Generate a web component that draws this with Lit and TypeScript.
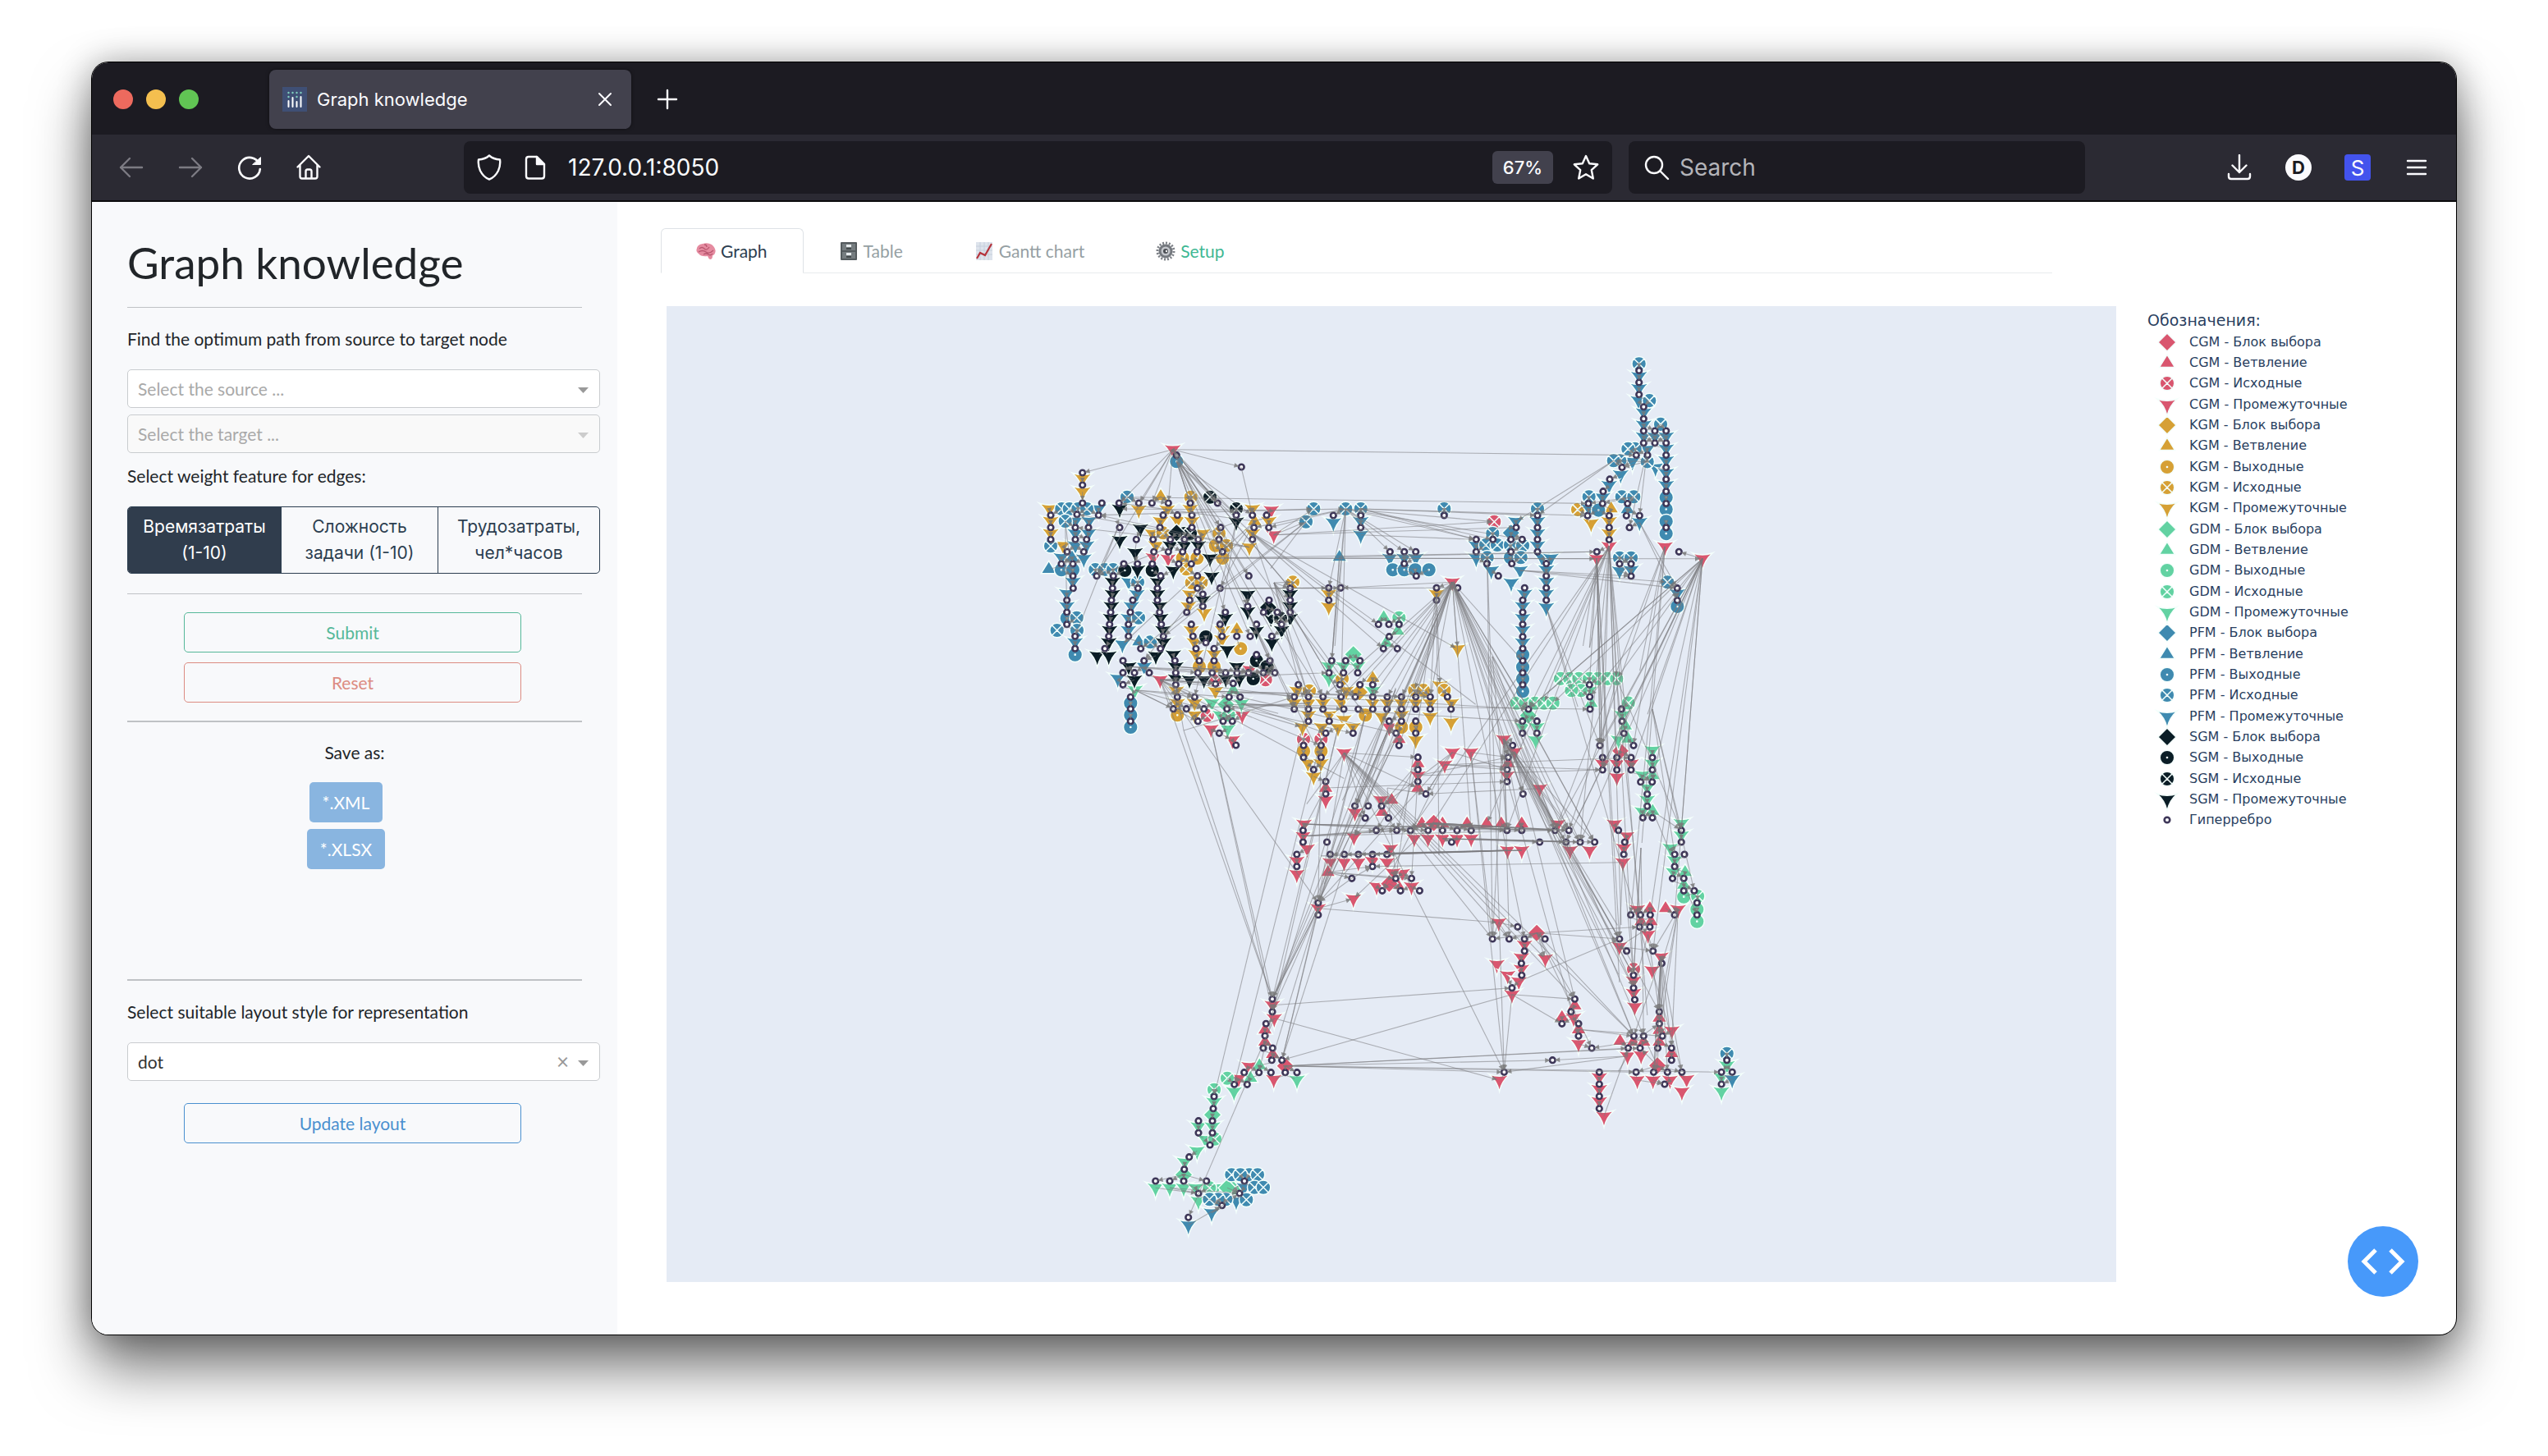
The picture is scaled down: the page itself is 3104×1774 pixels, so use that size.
import { LitElement, html, svg, css } from "lit";
import { customElement, property, state } from "lit/decorators.js";

type Node = { kind: string; x: number; y: number };
type Cluster = { x: number; y: number; sx: number; sy: number; nodes: Record<string, string> };

const PLOT = { x: 812, y: 373, w: 1766, h: 1189 };

const COLORS: Record<string, string> = {
  c: "#d9566f",
  k: "#d6a035",
  g: "#62d2a2",
  p: "#3f8ab0",
  s: "#0b1d26",
};

const SHAPES: Record<string, string> = {
  d: "M-12.4,-7A38,38 0 0 0 12.4,-7A38,38 0 0 0 0,13.6A38,38 0 0 0 -12.4,-7Z",
  u: "M-9.4,5.4L9.4,5.4L0,-10Z",
  b: "M0,-11L11,0L0,11L-11,0Z",
  x: "M8.8,0A8.8,8.8 0 1 1 0,-8.8A8.8,8.8 0 0 1 8.8,0ZM-6,-6L6,6M-6,6L6,-6",
  o: "M8.8,0A8.8,8.8 0 1 1 0,-8.8A8.8,8.8 0 0 1 8.8,0ZM0.6,0A0.6,0.6 0 1 1 0,-0.6A0.6,0.6 0 0 1 0.6,0Z",
};

const CLUSTERS: Cluster[] = [
  {
    x: 1250, y: 520, sx: 3, sy: 3,
    nodes: {
      h: "206 168;206 213;206 279;277 279;340 279;412 279;460 279;520 279;600 279;700 279;787 147;550 104;90 323;90 368;90 412;186 320;265 323;180 368;228 368;342 368;180 412;221 412;403 412;150 457;211 457;129 501;171 501;171 545;172 590;149 634;149 678;149 722;179 766;179 811;258 545;319 545;357 501;407 501;461 501;492 545;316 590;312 634;309 678;305 722;302 766;288 811;409 590;390 634;381 678;374 722;374 766;480 590;480 634;488 678;494 722;502 766;491 811;501 323;553 323;606 323;489 368;606 368;464 412;527 412;579 412;629 412;467 457;520 457;572 457;625 457;558 501;604 501;626 545;626 590;709 590;646 612;598 634;646 656;587 678;604 722;610 766;621 811;657 789;633 855;687 811;687 855;711 368;705 412;718 457;768 323;827 323;879 323;833 368;887 368;827 412;814 545;810 656;728 678;709 722;716 766;770 766;819 766;965 590;965 634;965 678;888 634;868 678;918 678;842 722;934 722;898 766;842 833;891 855;419 811;431 855;354 855;354 899;396 899;450 899;354 943;382 988;382 1031;382 1076;544 855;547 899;547 943;628 899;680 899;729 899;771 899;813 899;867 899;909 899;692 940;757 938;553 988;616 988;742 988;782 988;538 1031;586 1031;650 1031;734 1031;628 1076;720 1076;754 1076;706 1120;767 1164",
      cd: "536 83;896 305;905 395;465 478;519 482;490 925;676 1105;754 1145;790 1055;818 888",
      cx: "692 928;875 925;662 1055",
      kd: "206 190;206 238;85 300;90 345;90 390;135 434;412 303;515 303;600 301;491 345;553 343;606 345;461 390;475 434;645 390;827 300;887 345;827 390;816 440;598 612;593 656;651 680;604 744;615 788;621 832;687 832;549 965;692 967;553 1010;616 1010;616 1054;718 744;716 778",
      ku: "492 254;835 345;770 740",
      ko: "718 480;572 480;625 480;692 434;784 811;633 877;687 877;553 1054",
      kx: "602 257;500 388;705 390;732 434;585 520;605 570;640 570;975 568",
      gd: "398 962;679 1010;787 1012;737 1105;710 1054",
      gu: "757 962",
      gb: "730 1015",
      gx: "740 1054",
      pd: "265 300;180 345;230 345;180 390;228 390;180 434;221 434;129 478;211 482;171 567;149 610;149 656;375 567;405 612;385 656;374 700;374 744;352 795;431 877;335 920;179 788",
      pu: "83 520;168 478;412 785",
      po: "550 127;179 833;129 523;171 523;149 700;382 1010;382 1054;382 1098",
      px: "369 257;130 300;158 300;190 300;222 300;143 345;90 436;253 522;287 522;318 522;185 698;113 744;186 744;408 568;411 698;454 787",
      sd: "342 300;418 372;342 415;398 460;407 523;538 525;316 567;316 612;312 656;309 700;305 744;302 788;260 837;302 837;480 567;480 612;488 656;492 700;500 744;502 788;474 837;375 877;396 925;538 833;547 877;547 921;597 925;650 925;527 434;579 434;629 434;672 480;678 547;646 634;768 347;810 614;810 675;728 700;735 815;770 877;780 921;965 612;965 656;965 700;842 746;895 700;934 744;898 790;730 921",
      so: "361 525;461 525;657 768;842 855;880 877;830 921",
      sx: "672 257;768 300;578 390;600 390;930 700",
      sb: "550 388;885 660",
    },
  },
  {
    x: 1550, y: 580, sx: 3, sy: 3,
    nodes: {
      h: "223 144;323 144;323 188;628 144;206 409;250 409;206 454;600 409;600 454;677 409;430 277;482 277;524 277;482 320;526 365;388 542;426 542;463 542;427 587;406 631;457 631;217 675;268 675;320 675;207 719;260 719;312 719;95 763;247 763;320 763;367 763;80 807;132 807;185 807;251 807;303 807;367 807;420 807;472 807;524 807;577 807;640 807;80 852;132 852;185 852;261 852;314 852;367 852;419 852;472 852;524 852;577 852;653 852;132 896;208 896;427 896;472 896;524 896;195 940;295 940;452 940;524 940;463 985;114 985;178 985;114 1028;178 1028;151 1073;195 1117;195 1162;532 1028;532 1073;532 1117;561 1162;745 232;745 277;806 232;872 232;913 232;891 188;872 277;784 320;875 320;826 365;969 144;969 188;969 232;969 277;1001 320;1001 365;1001 409;1001 454;922 409;915 454;915 498;915 542;915 587;915 631;915 675;915 719;915 763;936 852;914 896;967 896;914 940;967 940;878 985;862 1028;858 1073;858 1117;916 1162;1159 763;1160 807;1161 852",
      cd: "658 388;845 962;885 1008;262 1012;658 1010;725 1010;630 1055;532 1095;858 1095;977 1142;427 918;195 1185",
      cu: "463 962;532 1050;532 1140;862 1050;195 1140",
      cx: "811 167;114 962;178 962",
      kd: "206 431;206 478;600 431;677 632;612 765;90 785;132 830;185 830;80 830;251 830;270 785;367 830;420 830;472 830;524 830;577 830;655 830;132 874;208 874;261 890;400 880;472 874;577 880;653 900;110 918;180 918;240 920;295 918;524 965;130 1050;178 1050;151 1098",
      ku: "367 738",
      kx: "255 741;135 785;520 783;552 783;628 783",
      ko: "340 874;472 918;524 918;114 1006;178 1006",
      kb: "318 790",
      gd: "207 695;260 695;312 695;207 740;367 785;914 918;967 918;962 965",
      gu: "407 516;458 566;416 609;1165 830",
      gx: "463 518;893 830;925 830;960 830;993 830;1025 830",
      gb: "296 652;935 875",
      pd: "223 170;323 166;323 215;430 300;482 300;524 300;745 254;745 300;890 166;800 345;905 345;873 390;969 166;969 210;969 254;985 298;1018 300;1001 343;1001 387;1001 431;1001 480;922 431;915 476;915 520;915 564;915 609",
      pu: "245 296",
      po: "440 343;482 343;522 343;572 343;870 298;915 653;915 698;915 741;915 787",
      px: "151 120;123 167;268 120;323 120;628 120;969 120;805 210;780 252;822 252;870 252;915 254;785 298;908 298",
      pb: "872 208",
    },
  },
  {
    x: 1800, y: 420, sx: 3, sy: 2.7034,
    nodes: {
      h: "590 85;590 124;590 164;607 205;607 244;607 284;648 284;689 284;607 324;648 324;689 324;580 364;621 364;689 364;528 404;689 404;483 443;689 443;459 483;689 483;457 523;548 523;689 523;405 523;402 563;481 563;544 563;592 563;481 602;555 602;689 602;481 642;436 682;736 682;519 722;561 722;561 762;730 802;730 842;526 1200;528 1240;535 1280;570 1320;447 1320;457 1360;509 1360;561 1360;639 1360;457 1400;509 1400;561 1400;639 1400;596 1440;638 1440;620 1480;620 1520;604 1558;639 1558",
      cd: "481 664;436 705;685 665;822 705;457 1380;509 1380;561 1380;509 1425",
      cb: "522 1338",
      kd: "415 588;481 582;481 622",
      ku: "488 540",
      kx: "366 543",
      gd: "408 1140;528 1220;515 1302;639 1336;639 1380;602 1418;620 1460;620 1500;602 1538",
      gu: "540 1255;550 1298;640 1418;640 1536",
      gx: "303 1100;337 1100;370 1100;408 1100;440 1100;475 1100;508 1100;378 1139;343 1139;551 1180",
      pd: "590 104;590 144;588 184;607 224;607 264;607 303;648 303;689 303;689 343;620 345;566 385;523 428;650 405;689 382;689 423;689 463;481 463;457 503;407 540;592 585;519 745;561 742;730 820",
      pu: "548 542",
      po: "442 545;689 503;689 542;689 582;689 622;730 862",
      px: "590 63;628 184;669 262;575 343;550 343;520 382;497 382;620 385;407 501;527 501;571 501;519 702;561 702;694 782",
    },
  },
  {
    x: 1540, y: 880, sx: 2.6133, sy: 3,
    nodes: {
      h: "289 306;331 306;374 306;322 350;396 350;124 395;357 395;422 395;466 395;522 395;568 395;614 395;659 395;773 395;820 395;926 395;970 395;124 438;200 438;597 438;877 438;961 438;1006 438;1052 438;1128 395;1148 438;1145 483;104 483;210 483;255 483;300 483;345 483;391 483;104 527;345 527;279 571;419 571;469 571;376 616;434 616;495 616;172 660;172 704;807 748;727 792;780 792;829 792;894 792;829 836;819 881;1328 395;1328 438;1307 483;1338 483;1307 527;1300 571;1336 571;1336 616;1369 616;1378 660;1378 704;1167 704;1198 704;1229 704;1307 704;1195 748;1228 748;1131 792;1154 836;1238 836;1266 881",
      cd: "372 284;289 330;127 372;286 420;124 416;137 462;104 507;104 555;478 425;522 425;568 425;614 425;659 425;402 462;210 512;255 512;300 512;345 507;391 512;358 600;440 552;410 550;469 600;284 645;172 680;935 372;775 468;820 468;974 468;1036 468;1115 372;1155 416;1145 460;1142 512;747 732;741 885;829 814;819 860;895 864;1188 684;1318 684;1222 776;1131 820;1263 858",
      cu: "406 284;376 328;502 370;568 370;646 370;709 370;755 370;820 370;203 548;425 594;1228 680;1278 680;1200 728;1232 728",
      cb: "540 368;398 590;868 770",
      gd: "1328 370;1328 414;1293 460;1307 505;1303 548",
      gu: "1340 548;1336 594",
      go: "1336 638;1378 684;1378 728",
      gx: "1380 636",
    },
  },
  {
    x: 1540, y: 1100, sx: 2.6133, sy: 3,
    nodes: {
      h: "820 265;789 311;989 352;977 398;948 442;1001 442;1001 487;1043 531;918 575;764 619;1067 619;1067 663;1067 707;1067 752;1176 265;1176 311;1180 354;1258 398;1258 442;1268 487;1177 487;1208 487;1159 531;1197 531;1253 531;1297 531;1297 575;1184 619;1240 619;1284 619;1330 619;1275 663;1473 575;1456 619;1490 619;1456 663",
      cd: "819 242;775 265;811 287;789 335;985 420;1001 515;1067 638;1067 682;1067 726;1082 780;1176 285;1176 330;1180 380;1235 247;1298 467;1157 560;1200 557;1188 648;1238 648;1292 648;1345 645;1330 690;749 648",
      cu: "989 375;948 418;1001 463;1133 505;1175 508;1208 508;1258 420;1258 465;1258 508;1297 550",
      cb: "1252 595",
      cx: "1176 243",
      gd: "1473 595;1456 638;1456 690",
      pd: "1490 645",
      px: "1473 551",
    },
  },
  {
    x: 1380, y: 1200, sx: 3, sy: 3,
    nodes: {
      h: "510 52;510 98;487 142;483 186;477 231;511 231;508 275;545 275;407 320;461 320;505 320;557 320;600 320;371 364;418 364;297 408;294 452;240 497;291 497;240 541;291 541;282 585;206 629;188 674;83 717;135 717;186 717;269 717;408 717;240 762;390 762;326 806;203 850",
      cd: "510 74;517 122;425 298;515 345;387 342",
      cu: "483 164;483 208;511 253",
      cb: "557 296",
      gd: "600 347;370 390;297 428;240 518;291 518;265 565;235 607;190 648;83 742;135 742;186 742;230 742;305 742;240 790",
      gu: "463 294;430 340",
      gx: "345 341;297 383;300 563;280 742;372 742",
      gb: "291 475;186 694;345 742",
      pd: "408 740;378 790;288 833;203 878",
      px: "361 694;425 694;393 694;456 694;445 740;477 740;415 785;340 784;312 784;280 784",
    },
  },
];

// Each entry fans out from its first point to every point after it.
const FANS: string[] = [
  "1429 548;1319 576;1512 569;1363 613;1387 613;1403 613;1424 613;1450 613;1336 700;1483 613;1506 627;1487 643;1521 702;1993 555;1528 735;1568 716;1555 805;1572 717",
  "1436 560;1450 613;1483 613;1512 626;1525 630;1548 672;1493 746;1523 775;1592 850;1612 848;1665 880",
  "1512 569;1525 620",
  "1552 710;1572 700;1571 717;1572 732;1592 849;1610 849;1594 878;1629 849;1637 849;1650 848",
  "1548 625;1372 628;1346 627;1600 620;1640 620",
  "1640 620;1529 644;1548 642;1619 717;1633 850",
  "1548 652;1591 636;1599 620;1820 638;1848 630",
  "1363 608;1420 608;1935 613",
  "1639 620;1693 672;1711 672;1724 672;1798 657;1849 658;1618 795;1626 790;1820 633",
  "1658 650;1800 657",
  "1658 620;1799 657;1811 657;1873 626;1935 628",
  "1632 679;1617 800;1620 805;1640 682;1945 681",
  "1473 685;1935 682;1945 679;2073 681",
  "1486 717;1618 716;1634 716;1769 708",
  "1430 815;1530 820;1541 819;1553 820",
  "1413 828;1434 848;1445 848;1459 863;1477 832;1481 833;1502 832;1552 832;1620 828;1434 862",
  "1380 814;1460 820;1490 820;1535 817",
  "1384 846;1434 862;1447 848;1494 850",
  "1769 708;1634 716;1749 716;1776 716;1776 787;1610 849;1632 849;1655 836;1673 849;1690 849;1707 849;1724 849;1742 849;1672 834;1724 834;1656 980;1640 1025;1651 970;1612 1080;1634 978;1700 878;1704 908",
  "1769 712;1856 806;1862 864;1873 864;1836 908;1838 923;1855 967;1895 1010;1911 1012;1925 1025;1942 1025;1922 1260;1990 1262;2000 1262;1988 1208;1848 1145;1800 1010",
  "1749 732;1755 835;1742 849;1753 1045;1709 1070",
  "1945 681;1950 908;1951 914;1936 792;1952 931;1955 940;1938 830;1928 790;1965 1144;1973 1200",
  "1960 666;1936 792;1951 914;1952 931;1970 931;1987 931;1975 820;1862 864;1880 864;1820 1010;1836 1010;1740 1010;1718 1010;1930 1025;1975 1130;1990 1186;2007 1240",
  "2028 668;1997 820;1990 914;1894 1012;1911 1010;1987 1115;2000 1030",
  "2073 682;2049 680;1862 864;1873 864;1892 850;1937 850;1975 820;1952 931;1987 931;2006 873;2013 950;2012 1115;2023 1160;1949 914;1920 1000;1894 1012;1911 1025;1925 1025;2038 1115;2048 1010",
  "1831 900;1855 967;1838 923;1837 935;1836 952;1836 1010;1854 1010;1894 1012;1911 1012;1908 1025;1925 1025;1942 1025;1970 1145;1973 1190;1990 1188;1991 1203;1830 1143;1972 1130;1858 970;1820 1145",
  "1845 917;1855 967;1970 1145;1988 1188;2018 1233;1993 1262;1918 1217",
  "1637 917;1727 923;1718 970;1700 1010;1660 1010;1740 1010;1818 1142;1838 1144;1913 1217;1832 1306;1880 1175;1990 1262;1608 1100;1577 1011;1590 982",
  "1769 917;1727 971;1837 938;1685 974;1606 1097",
  "1791 917;1838 920;1818 1142;1832 1306",
  "1760 932;1727 971;1837 938;1950 943;1990 930;1686 1080",
  "1727 923;1726 938;1676 1011;1709 1011;1640 1025",
  "1726 938;1950 931;1836 923;1714 1070",
  "1876 961;1727 969;1875 968",
  "1615 960;1836 952",
  "1690 960;1727 967;1700 1072",
  "1588 1011;1700 1006;1740 1004;1836 1008;1894 1008;1911 1010",
  "1588 1013;1677 1008;1702 1009",
  "1588 1016;1718 1005;1895 1007",
  "1746 1003;1677 1011;1701 1011;1719 1011;1757 1011;1775 1011;1792 1011;1836 1011;1854 1011;1894 1011;1911 1010;1650 1096",
  "1746 1006;1894 1014;1911 1014;1836 1014",
  "1732 1006;1836 1004;1854 1006;1911 1009",
  "1758 1020;1876 1026;1908 1026;1925 1026;1942 1026",
  "1792 1022;1908 1027;1925 1028",
  "1836 1034;1621 1041;1638 1041;1655 1041;1672 1041;1690 1041",
  "1854 1034;1638 1041;1672 1041;1690 1040;1606 1043",
  "1977 1048;1672 1054",
  "1618 1063;1647 1070;1700 1070;1672 1056;1719 1072",
  "1647 1070;1606 1099;1672 1055",
  "1606 1099;1650 1095;1553 1215;1555 1230;1550 1290;1550 1217;1562 1290",
  "1606 1116;1826 1122",
  "1826 1122;1849 1129;1818 1143;1838 1143",
  "1872 1137;1997 1129;1973 1143;1818 1144;1838 1144;1857 1144;1882 1144;1990 1262;1918 1215;1939 1277;1870 1166",
  "1973 1153;1982 1158;2014 1158;2007 1128",
  "1842 1195;1973 1152",
  "1551 1218;1840 1210",
  "1842 1210;1562 1291;1918 1217;1833 1306;1902 1246",
  "1560 1236;1815 1310",
  "1566 1299;1984 1277;1996 1277;1892 1292;2002 1305;1830 1304;2098 1299;1580 1307",
  "1984 1284;1892 1292;1832 1306;1970 1308",
  "1947 1357;1980 1278",
  "1918 1255;1990 1262;2014 1262",
  "1991 1262;2021 1255;1939 1277;1984 1277;1997 1277",
  "2025 1173;2021 1233;2021 1248;2019 1277;2036 1277;2049 1307;2012 1306;2015 1306;2031 1306;1990 1262;2025 1262",
  "2040 1115;2021 1233;2014 1158;2025 1173;2036 1277;2012 1306",
  "2013 1140;2014 1158;1991 1203;2021 1233",
  "1999 1033;1978 1190;1990 1188;2003 1262",
  "1977 1052;1973 1143;1988 1190",
  "2011 996;2048 1002;2055 1110",
  "2013 864;2048 1010;2040 1041;2063 1085",
  "1980 820;2048 1008;2003 1115;1952 914",
  "1994 1307;2028 1321",
  "2012 1300;1994 1306;2031 1306;2049 1306;2019 1248;2004 1262;1997 1277",
  "1480 893;1510 893;1553 1216;1551 1230",
  "1442 890;1550 1217;1430 835;1579 850",
  "1413 830;1579 850;1602 908;1550 1218;1640 950;1606 1099",
  "1521 750;1600 924;1554 820;1582 864",
  "1591 850;1480 1336;1430 863;1483 863",
  "1600 900;1504 1321;1606 1098",
  "1550 1240;1448 1484",
  "1635 890;1540 1308;1550 1215",
  "1665 880;1565 1290;1553 1232;1606 1097",
  "1690 880;1570 1290;1552 1215;1606 1097",
  "1710 880;1610 1095;1651 980;1552 1215",
  "1700 840;1700 835;1640 974;1606 1096;1555 1216",
  "1480 840;1700 850;1740 850;1862 864;1700 893",
  "1510 858;1560 870;1630 864;1862 878;1602 893",
  "1500 860;1580 878;1636 893;1938 863",
  "1378 835;1459 863;1450 880",
  "1515 630;1480 800;1450 850;1340 700",
  "1536 635;1363 610;1366 790;1394 803;1485 717",
  "1595 640;1390 790;1410 770;1546 695",
  "1530 660;1300 642;1319 627;1338 628",
  "1298 640;1299 715;1298 740",
  "1363 640;1310 775;1337 700;1364 640",
  "1525 655;1780 790;1800 860;1592 849;1680 760;1692 790",
  "1960 568;1856 628;1884 620",
  "2005 560;1960 568;1977 567;2017 551",
  "2017 555;1998 642;1993 627",
  "1985 595;1935 602;1952 613;1982 627",
  "1860 695;1986 702;2031 707;2043 716",
  "1985 640;2042 715;2045 732",
  "1823 680;1824 1143;1832 1304",
  "1818 800;1838 1000;1895 1012;1942 1026",
  "1880 740;1923 864;1940 900;2049 1306",
  "1442 1431;1408 1439;1425 1439;1442 1439;1470 1439",
  "1408 1447;1460 1454",
  "1425 1447;1460 1454;1510 1454",
  "1447 1484;1489 1469",
  "1476 1478;1489 1469;1510 1454",
];

const ARROW = { standoff: 3, length: 6, half: 3 };
const SNAP = 14;

function buildNodes(): Node[] {
  const out: Node[] = [];
  for (const c of CLUSTERS) {
    for (const [kind, list] of Object.entries(c.nodes)) {
      for (const pair of list.split(";")) {
        const [px, py] = pair.split(" ").map(Number);
        out.push({ kind, x: c.x + px / c.sx - PLOT.x, y: c.y + py / c.sy - PLOT.y });
      }
    }
  }
  const order = "ckgpsh";
  return out.sort((a, b) => order.indexOf(a.kind[0]) - order.indexOf(b.kind[0]));
}

const r1 = (n: number) => Math.round(n * 10) / 10;

function edgePath(x1: number, y1: number, x2: number, y2: number) {
  const len = Math.hypot(x2 - x1, y2 - y1) || 1;
  const ux = (x2 - x1) / len;
  const uy = (y2 - y1) / len;
  const tx = x2 - ux * ARROW.standoff;
  const ty = y2 - uy * ARROW.standoff;
  const bx = tx - ux * ARROW.length;
  const by = ty - uy * ARROW.length;
  return {
    line: `M${r1(x1)},${r1(y1)}L${r1(tx)},${r1(ty)}`,
    head: `M${r1(tx)},${r1(ty)}L${r1(bx - uy * ARROW.half)},${r1(by + ux * ARROW.half)}L${r1(bx + uy * ARROW.half)},${r1(by - ux * ARROW.half)}Z`,
  };
}

function nearest(list: Node[], x: number, y: number): Node | undefined {
  let best: Node | undefined;
  let dist = SNAP;
  for (const n of list) {
    const d = Math.hypot(n.x - x, n.y - y);
    if (d < dist) {
      dist = d;
      best = n;
    }
  }
  return best;
}

function buildEdges(nodes: Node[]) {
  const lines: string[] = [];
  let stubs = "";
  let heads = "";
  const rings = nodes.filter((n) => n.kind === "h");
  const marks = nodes.filter((n) => n.kind !== "h");
  for (const fan of FANS) {
    const pts = fan.split(";").map((p) => p.split(" ").map(Number));
    const ax = pts[0][0] - PLOT.x;
    const ay = pts[0][1] - PLOT.y;
    const from = nearest(marks, ax, ay) ?? { x: ax, y: ay };
    for (const [px, py] of pts.slice(1)) {
      const bx = px - PLOT.x;
      const by = py - PLOT.y;
      const hit = nearest(rings, bx, by) ?? nearest(marks, bx, by);
      const e = edgePath(from.x, from.y, hit ? hit.x : bx, hit ? hit.y : by);
      lines.push(e.line);
      if (hit) heads += e.head;
    }
  }
  for (const h of rings) {
    for (const m of marks) {
      if (Math.hypot(h.x - m.x, h.y - m.y) > 17) continue;
      if (m.y < h.y) {
        const e = edgePath(m.x, m.y, h.x, h.y);
        stubs += e.line;
        heads += e.head;
      } else {
        stubs += edgePath(h.x, h.y + 3, m.x, m.y).line;
      }
    }
  }
  return { lines, stubs, heads };
}

const NODES = buildNodes();
const EDGES = buildEdges(NODES);

const LEGEND: [string, string][] = [
  ["cb", "CGM - Блок выбора"],
  ["cu", "CGM - Ветвление"],
  ["cx", "CGM - Исходные"],
  ["cd", "CGM - Промежуточные"],
  ["kb", "KGM - Блок выбора"],
  ["ku", "KGM - Ветвление"],
  ["ko", "KGM - Выходные"],
  ["kx", "KGM - Исходные"],
  ["kd", "KGM - Промежуточные"],
  ["gb", "GDM - Блок выбора"],
  ["gu", "GDM - Ветвление"],
  ["go", "GDM - Выходные"],
  ["gx", "GDM - Исходные"],
  ["gd", "GDM - Промежуточные"],
  ["pb", "PFM - Блок выбора"],
  ["pu", "PFM - Ветвление"],
  ["po", "PFM - Выходные"],
  ["px", "PFM - Исходные"],
  ["pd", "PFM - Промежуточные"],
  ["sb", "SGM - Блок выбора"],
  ["so", "SGM - Выходные"],
  ["sx", "SGM - Исходные"],
  ["sd", "SGM - Промежуточные"],
  ["h", "Гиперребро"],
];

const marker = (kind: string, x: number, y: number) =>
  kind === "h"
    ? svg`<circle cx=${r1(x)} cy=${r1(y)} r="3.3" fill="#fff" stroke="#3d3658" stroke-width="2.6"></circle>`
    : svg`<path transform=${`translate(${r1(x)} ${r1(y)})`} d=${SHAPES[kind[1]]} fill=${COLORS[kind[0]]}
        stroke="#f4fffc" stroke-width="1.5" stroke-miterlimit="10"></path>`;

@customElement("graph-plot")
export class GraphPlot extends LitElement {
  static styles = css`
    :host { display: block; background: #e5ebf5; min-width: 0; }
    .canvas { display: block; width: 100%; height: 100%; }
    .edge { fill: none; stroke: #7a7a7e; stroke-opacity: 0.55; stroke-width: 1.1px; }
    .head { fill: #777; fill-opacity: 0.8; }
  `;
  render() {
    return html`<svg class="canvas" viewBox="0 0 ${PLOT.w} ${PLOT.h}" role="img" aria-label="Graph">
      ${NODES.map((n) => marker(n.kind, n.x, n.y))}
      ${EDGES.lines.map((d) => svg`<path class="edge" d=${d}></path>`)}
      <path class="edge" d=${EDGES.stubs}></path>
      <path class="head" d=${EDGES.heads}></path>
    </svg>`;
  }
}

@customElement("graph-legend")
export class GraphLegend extends LitElement {
  static styles = css`
    :host { display: block; color: #2a3f5f; font-family: Verdana, "DejaVu Sans", sans-serif; }
    .title { margin: 0; font-size: 19px; line-height: 24px; font-weight: 400; padding-top: 5px; }
    .rows { list-style: none; margin: 0; padding: 2px 0 0; display: grid; grid-auto-rows: 1fr; height: 608px; }
    .row { display: flex; align-items: center; gap: 15px; font-size: 16px; line-height: 24px; white-space: nowrap; padding-left: 12px; }
    .mark { width: 24px; height: 24px; flex: none; overflow: visible; }
  `;
  render() {
    return html`<h2 class="title">Обозначения:</h2>
      <ul class="rows">
        ${LEGEND.map(
          ([kind, label]) => html`<li class="row">
            <svg class="mark" viewBox="-12 -12 24 24" aria-hidden="true">${marker(kind, 0, 0)}</svg>
            <span>${label}</span>
          </li>`,
        )}
      </ul>`;
  }
}

const icon = (name: string, body: unknown, size = 32) =>
  html`<svg class="icon" width=${size} height=${size} viewBox="0 0 32 32" aria-hidden="true" data-name=${name}>${body}</svg>`;

@customElement("browser-chrome")
export class BrowserChrome extends LitElement {
  static styles = css`
    :host { display: block; color: #fbfbfe; font-family: Inter, sans-serif; }
    button { background: none; border: 0; padding: 0; color: inherit; font: inherit; display: flex; align-items: center; justify-content: center; }
    .icon { display: block; fill: none; stroke: currentColor; stroke-width: 2.4; stroke-linecap: round; stroke-linejoin: round; flex: none; }
    .strip { height: 88px; background: #1c1b22; display: flex; align-items: center; box-sizing: border-box; padding: 2px 0 0 26px; }
    .lights { display: flex; gap: 16px; width: 190px; }
    .light { width: 24px; height: 24px; border-radius: 50%; }
    .red { background: #ed6a5e; }
    .amber { background: #f4bf4f; }
    .green { background: #61c554; }
    .tab { display: flex; align-items: center; gap: 12px; width: 441px; height: 72px; box-sizing: border-box; padding: 0 16px; border-radius: 8px; background: #42414d; font-size: 22px; line-height: 28px; box-shadow: 0 0 4px rgba(0, 0, 0, 0.5); }
    .favicon { display: block; width: 30px; height: 30px; }
    .tab-title { flex: 1; white-space: nowrap; }
    .new { margin-left: 28px; }
    .bar { height: 80px; background: #2b2a33; border-bottom: 2px solid #0c0c0d; display: grid; grid-template-columns: 453px minmax(0, 1399fr) minmax(0, 576fr) 452px; align-items: center; }
    .nav { display: flex; gap: 40px; padding-left: 32px; }
    .off { color: #7c7b83; }
    .field { height: 64px; background: #1c1b22; border-radius: 8px; display: flex; align-items: center; box-sizing: border-box; min-width: 0; }
    .url { padding: 0 16px 0 15px; gap: 24px; }
    .search { margin-left: 20px; padding: 0 18px; gap: 12px; }
    .text { flex: 1; min-width: 0; background: none; border: 0; outline: 0; padding: 0; color: inherit; font: 400 28px/32px Inter, sans-serif; }
    .text::placeholder { color: #b4b4b9; opacity: 1; }
    .zoom { width: 74px; height: 40px; border-radius: 6px; background: #42414d; font-size: 22px; font-weight: 500; }
    .tools { display: flex; justify-content: flex-end; gap: 40px; padding-right: 32px; }
    .badge { width: 32px; height: 32px; background: #fbfbfe; color: #1c1b22; font-weight: 700; font-size: 22px; border-radius: 50%; }
    .square { width: 32px; height: 32px; background: #4353ed; border-radius: 4px; font-size: 26px; }
  `;
  render() {
    return html`
      <div class="strip">
        <div class="lights"><span class="light red"></span><span class="light amber"></span><span class="light green"></span></div>
        <div class="tab">
          <svg class="favicon" viewBox="0 0 30 30" aria-hidden="true">
            <rect width="30" height="30" fill="#3f4f75"></rect>
            <path d="M7.500 17V24M12.500 13V24M17.500 18V24M22.500 12V24" stroke="#fff" stroke-width="2" stroke-linecap="round"></path>
            <g fill="#80cfbe"><circle cx="7.500" cy="7" r="1.200"></circle><circle cx="12.500" cy="7" r="1.200"></circle><circle cx="17.500" cy="7" r="1.200"></circle><circle cx="22.500" cy="7" r="1.200"></circle><circle cx="7.500" cy="12" r="1.200"></circle><circle cx="17.500" cy="12" r="1.200"></circle></g>
          </svg>
          <span class="tab-title">Graph knowledge</span>
          <button aria-label="Close tab">${icon("close", svg`<path d="M9 9L23 23M23 9L9 23" stroke-width="2"></path>`)}</button>
        </div>
        <button class="new" aria-label="New tab">${icon("plus", svg`<path d="M16 5V27M5 16H27"></path>`)}</button>
      </div>
      <div class="bar">
        <div class="nav">
          <button class="off" aria-label="Back">${icon("back", svg`<path d="M29 16H3M14 5L3 16L14 27"></path>`)}</button>
          <button class="off" aria-label="Forward">${icon("forward", svg`<path d="M3 16H29M18 5L29 16L18 27"></path>`)}</button>
          <button aria-label="Reload">${icon("reload", svg`<path d="M27.500 11A12.800 12.800 0 1 0 28.800 18" stroke-width="2.600"></path><path d="M29.500 4V12.500H20Z" fill="currentColor" stroke-width="1"></path>`)}</button>
          <button aria-label="Home">${icon("home", svg`<path d="M2.500 15.500L16 2L29.500 15.500M5.500 13V27Q5.500 29.500 8 29.500H24Q26.500 29.500 26.500 27V13M12.500 29V21Q12.500 18.500 14.500 18.500H17.500Q19.500 18.500 19.500 21V29"></path>`)}</button>
        </div>
        <div class="field url">
          ${icon("shield", svg`<path d="M16 1.500Q21 6 29 6.500Q30 13 27 20Q23 28 16 30.500Q9 28 5 20Q2 13 3 6.500Q11 6 16 1.500Z"></path>`)}
          ${icon("page", svg`<path d="M8 3H18L27 12V26.500Q27 29.500 24 29.500H8Q5 29.500 5 26.500V6Q5 3 8 3Z"></path><path d="M18 3L27 12H18Z" fill="currentColor"></path>`)}
          <input class="text" aria-label="Address" value="127.0.0.1:8050" />
          <button class="zoom">67%</button>
          <button aria-label="Bookmark">${icon("star", svg`<path d="M16 2L20.200 11.200L30.200 12.300L22.800 19.200L24.800 29.500L16 24.300L7.200 29.500L9.200 19.200L1.800 12.300L11.800 11.200Z"></path>`)}</button>
        </div>
        <div class="field search">
          ${icon("search", svg`<circle cx="13" cy="13" r="10"></circle><path d="M20.500 20.500L30 30"></path>`)}
          <input class="text" aria-label="Search" placeholder="Search" />
        </div>
        <div class="tools">
          <button aria-label="Downloads">${icon("download", svg`<path d="M16 1V22M7.500 13.500L16 22L24.500 13.500M3 24V27Q3 30 6 30H26Q29 30 29 27V24"></path>`)}</button>
          <button class="badge" aria-label="Extension D">D</button>
          <button class="square" aria-label="Extension S">S</button>
          <button aria-label="Menu">${icon("menu", svg`<path d="M5 8H27M5 16H27M5 24H27"></path>`)}</button>
        </div>
      </div>`;
  }
}

@customElement("side-panel")
export class SidePanel extends LitElement {
  @state() private weight = 0;

  static styles = css`
    :host { display: flex; flex-direction: column; box-sizing: border-box; background: #f8f9fb; color: #212529; font: 400 21px/32px Lato, sans-serif; padding: 42px 21px 40px 43px; }
    h1 { margin: 0; font-weight: 400; font-size: 53px; line-height: 64px; }
    .rule { border: 0; margin: 22px 22px 0 0; height: 1px; background: #bfc2c5; }
    .low { margin-top: 24px; }
    .thick { height: 2px; }
    .note { display: block; margin: 22px 0 0; }
    .tight { margin-top: 12px; }
    .pick { position: relative; margin-top: 21px; }
    .next { margin-top: 8px; }
    .select { appearance: none; display: block; width: 100%; height: 47px; box-sizing: border-box; border: 1px solid #c9cccf; border-radius: 5px; background: #fff; padding: 0 60px 0 12px; font: inherit; color: #333; opacity: 1; }
    .empty { color: #a9a9a9; }
    .select:disabled { background: #f9f9f9; }
    .caret { position: absolute; right: 14px; top: 22px; width: 13px; height: 7px; fill: #999; pointer-events: none; }
    .dim { fill: #ccc; }
    .clear { position: absolute; right: 38px; top: 7px; border: 0; background: none; padding: 0; font: 400 26px/32px Lato, sans-serif; color: #999; }
    .group { display: grid; grid-template-columns: 186px 191px 1fr; margin: 21px 0 0; padding: 0; border: 1px solid #2c3e50; border-radius: 5px; overflow: hidden; height: 82px; box-sizing: border-box; }
    .option { display: flex; align-items: center; justify-content: center; text-align: center; font: 400 21px/32px Inter, sans-serif; color: #2c3e50; border-left: 1px solid #2c3e50; }
    .option:first-of-type { border-left: 0; }
    .option.on { background: #303d4d; color: #fff; }
    .hidden { position: absolute; opacity: 0; width: 1px; height: 1px; margin: 0; }
    .stack { display: grid; gap: 12px; margin: 22px 96px 0 69px; }
    .last { margin-top: 27px; }
    .button { height: 49px; box-sizing: border-box; border: 1px solid; border-radius: 5px; background: transparent; font: inherit; padding: 0; }
    .ok { color: #56b899; }
    .bad { color: #dc8c82; }
    .info { color: #4a90cf; }
    .save { text-align: center; margin: 21px 22px 0 0; }
    .files { display: flex; flex-direction: column; align-items: center; gap: 8px; margin: 20px 43px 112px 0; }
    .file { border: 0; height: 49px; padding: 0 16px; border-radius: 5px; background: #89b5e0; color: #fff; font: inherit; }
  `;

  render() {
    const options = [
      ["Времязатраты", "(1-10)"],
      ["Сложность", "задачи (1-10)"],
      ["Трудозатраты,", "чел*часов"],
    ];
    const caret = (cls = "") => html`<svg class="caret ${cls}" viewBox="0 0 13 7" aria-hidden="true"><path d="M0 0H13L6.500 7Z"></path></svg>`;
    return html`
      <h1>Graph knowledge</h1>
      <hr class="rule" />
      <label class="note" for="source">Find the optimum path from source to target node</label>
      <div class="pick">
        <select class="select empty" id="source"><option>Select the source ...</option></select>${caret()}
      </div>
      <div class="pick next">
        <select class="select empty" aria-label="Target" disabled><option>Select the target ...</option></select>${caret("dim")}
      </div>
      <span class="note tight" id="weight">Select weight feature for edges:</span>
      <div class="group" role="radiogroup" aria-labelledby="weight">
        ${options.map(
          ([a, b], i) => html`<label class="option ${this.weight === i ? "on" : ""}">
            <input class="hidden" type="radio" name="weight" .checked=${this.weight === i} @change=${() => (this.weight = i)} />
            <span>${a}<br />${b}</span>
          </label>`,
        )}
      </div>
      <hr class="rule low" />
      <div class="stack">
        <button class="button ok">Submit</button>
        <button class="button bad">Reset</button>
      </div>
      <hr class="rule thick" />
      <div class="save">Save as:</div>
      <div class="files">
        <button class="file">*.XML</button>
        <button class="file">*.XLSX</button>
      </div>
      <hr class="rule thick" />
      <label class="note" for="layout">Select suitable layout style for representation</label>
      <div class="pick">
        <select class="select" id="layout"><option>dot</option></select>
        <button class="clear" aria-label="Clear">×</button>${caret()}
      </div>
      <div class="stack last"><button class="button info">Update layout</button></div>`;
  }
}

const TAB_ICONS = {
  brain: svg`<path d="M0.500 10Q1 4 8 3Q14 1 19 4Q24 8 23.500 13Q23 16 20 17.500Q20 22 17 22Q15 21 14 18Q6 19 3 15Q0 13 0.500 10Z" fill="#e58ba0"></path>
    <path d="M4 9Q7 6 10 9T16 7M3 13Q8 10 12 13T21 11M9 16Q12 14 15 16T20 15M10 4Q13 4 13 7" fill="none" stroke="#b9566f" stroke-width="1.300"></path>`,
  cabinet: svg`<rect x="2" y="1" width="20" height="22" rx="1" fill="#555b5e"></rect>
    <rect x="4" y="3" width="16" height="8" fill="#767d80"></rect><rect x="4" y="13" width="16" height="8" fill="#767d80"></rect>
    <rect x="9" y="4" width="6" height="3" fill="#e8ecee"></rect><rect x="9" y="14" width="6" height="3" fill="#e8ecee"></rect>
    <path d="M9 9H15M9 19H15" stroke="#33383a" stroke-width="1.500"></path>`,
  chart: svg`<rect x="2" y="1" width="20" height="22" fill="#dde3ec"></rect>
    <path d="M2 6H22M2 11H22M2 16H22M7 1V23M12 1V23M17 1V23" stroke="#c3ccd9" stroke-width="0.800"></path>
    <path d="M3 21L7 14L13 17L21 3" fill="none" stroke="#b5333c" stroke-width="2.200"></path>`,
  gear: svg`<circle cx="12" cy="12" r="10" fill="none" stroke="#7d8187" stroke-width="3" stroke-dasharray="2 1.900"></circle>
    <circle cx="12" cy="12" r="7" fill="#c4c7cc" stroke="#74787e" stroke-width="3"></circle>
    <circle cx="12" cy="12" r="3" fill="#4b4e54"></circle><circle cx="13" cy="12" r="1.200" fill="#eee"></circle>`,
};

@customElement("page-tabs")
export class PageTabs extends LitElement {
  @property({ type: Number }) active = 0;

  static styles = css`
    :host { display: block; }
    .tabs { display: flex; border-bottom: 1px solid #e9ecee; height: 54px; }
    .tab { display: flex; align-items: center; gap: 6px; box-sizing: border-box; height: 55px; border: 1px solid transparent; border-radius: 6px 6px 0 0; background: none; padding: 0 43px 0 42px; font: 400 21px/32px Lato, sans-serif; color: #95a0a3; white-space: nowrap; }
    .tab.on { border-color: #dee2e6; border-bottom-color: #fff; background: #fff; color: #2c3e50; }
    .tab.link { color: #3fb894; }
    .emoji { width: 24px; height: 24px; flex: none; }
  `;

  render() {
    const tabs: [keyof typeof TAB_ICONS, string][] = [
      ["brain", "Graph"],
      ["cabinet", "Table"],
      ["chart", "Gantt chart"],
      ["gear", "Setup"],
    ];
    return html`<div class="tabs" role="tablist">
      ${tabs.map(
        ([name, label], i) => html`<button class="tab ${i === this.active ? "on" : ""} ${i === 3 ? "link" : ""}" role="tab"
          aria-selected=${i === this.active ? "true" : "false"} @click=${() => (this.active = i)}>
          <svg class="emoji" viewBox="0 0 24 24" aria-hidden="true">${TAB_ICONS[name]}</svg>${label}
        </button>`,
      )}
    </div>`;
  }
}

@customElement("app-root")
export class AppRoot extends LitElement {
  static styles = css`
    :host { display: flex; box-sizing: border-box; min-height: 100vh; padding: 76px 112px 148px; background: #fff; overflow: hidden; }
    .window { position: relative; flex: 1; min-width: 0; display: flex; flex-direction: column; border-radius: 20px; background: #fff;
      box-shadow: 0 0 0 1px #000, 0 40px 70px rgba(0, 0, 0, 0.55), 0 0 40px rgba(0, 0, 0, 0.3); }
    .top { border-radius: 20px 20px 0 0; overflow: hidden; }
    .body { flex: 1; display: flex; min-height: 0; border-radius: 0 0 20px 20px; overflow: hidden; }
    .side { width: 640px; flex: none; }
    .main { flex: 1; min-width: 0; display: flex; flex-direction: column; padding: 32px 0 64px 53px; }
    .tabs { margin-right: 492px; }
    .graph { flex: 1; min-height: 0; display: flex; gap: 38px; margin-top: 40px; padding-left: 7px; }
    .plot { flex: 1; }
    .legend { width: 376px; flex: none; }
    .debug { position: absolute; right: 46px; bottom: 46px; width: 86px; height: 86px; border-radius: 50%; border: 0; padding: 0; background: #4799fa; display: flex; align-items: center; justify-content: center; }
  `;
  render() {
    return html`<div class="window">
      <browser-chrome class="top"></browser-chrome>
      <div class="body">
        <side-panel class="side"></side-panel>
        <main class="main">
          <page-tabs class="tabs"></page-tabs>
          <div class="graph">
            <graph-plot class="plot"></graph-plot>
            <graph-legend class="legend"></graph-legend>
          </div>
        </main>
      </div>
      <button class="debug" aria-label="Developer tools">
        <svg width="58" height="34" viewBox="0 0 58 34" fill="none" stroke="#fff" stroke-width="5" aria-hidden="true">
          <path d="M20 3L6 17L20 31M38 3L52 17L38 31"></path>
        </svg>
      </button>
    </div>`;
  }
}
